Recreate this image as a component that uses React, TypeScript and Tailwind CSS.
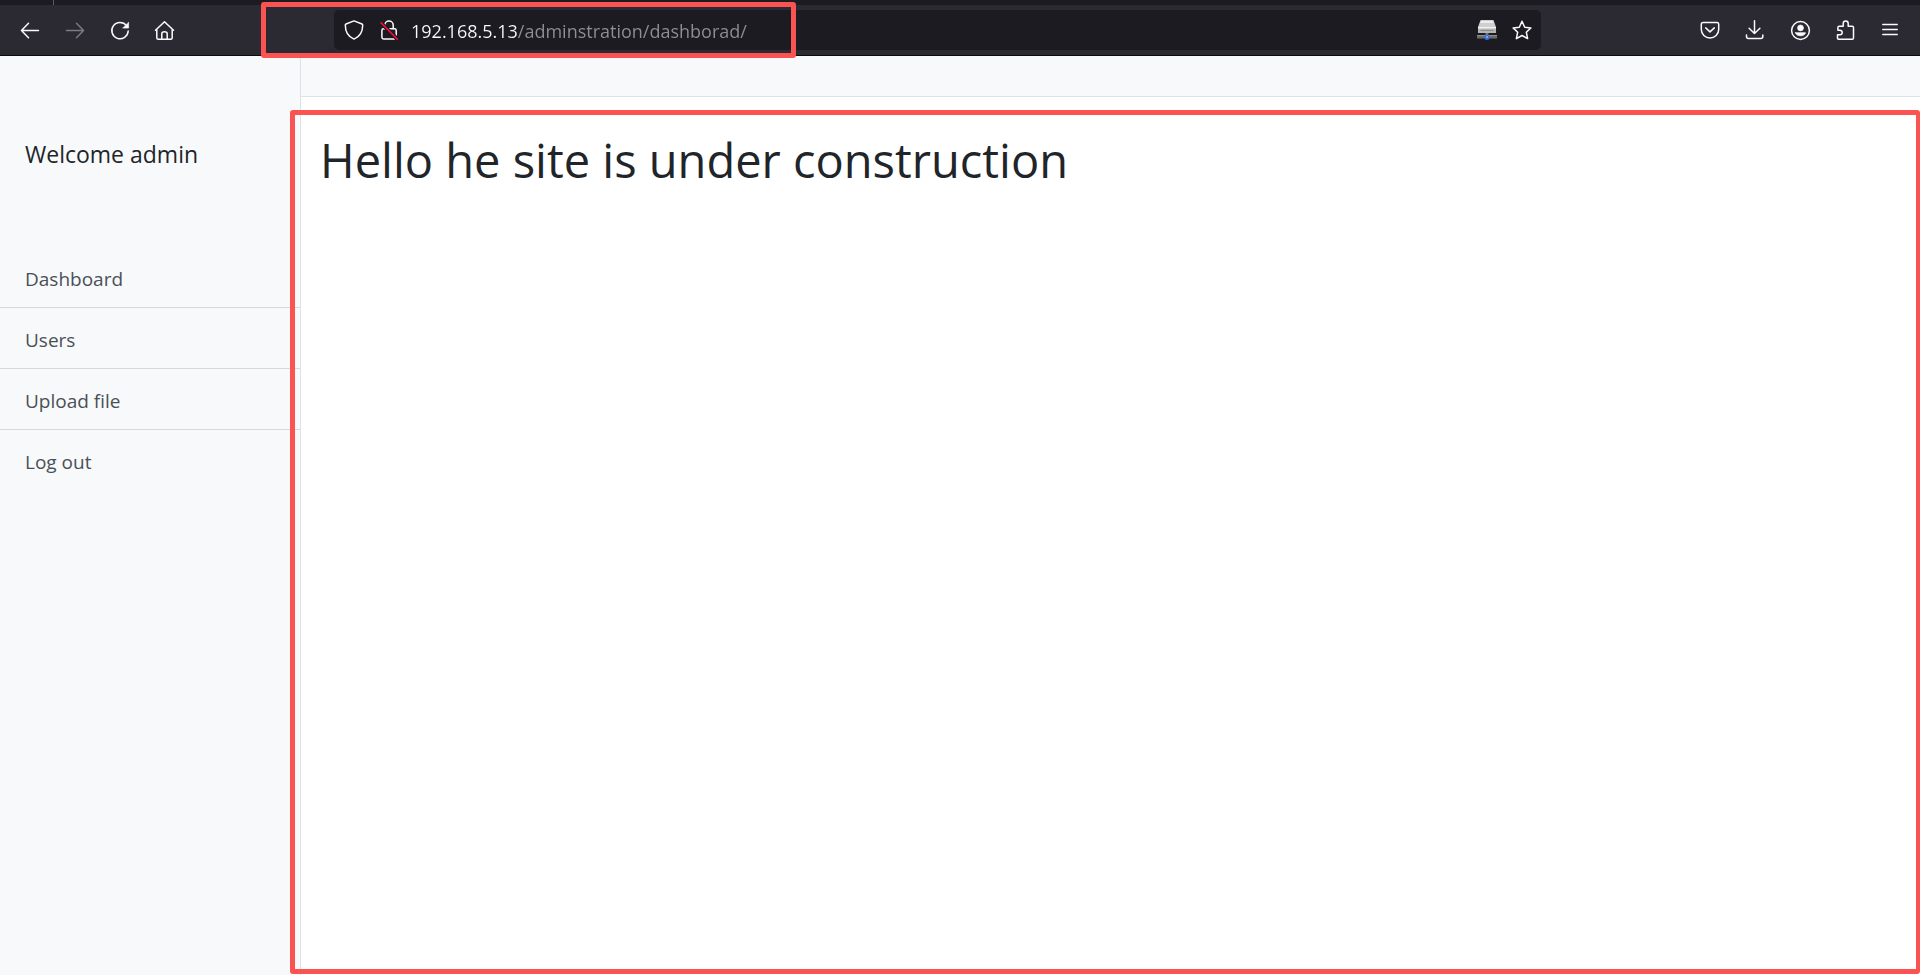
import type { ReactNode } from 'react';

type IconButtonProps = { label: string; muted?: boolean; children: ReactNode };

function Icon({ children }: { children: ReactNode }) {
  return (
    <svg
      viewBox="0 0 20 20"
      className="size-5 shrink-0 overflow-visible"
      fill="none"
      stroke="currentColor"
      strokeWidth="1.5"
      strokeLinecap="round"
      strokeLinejoin="round"
      aria-hidden="true"
    >
      {children}
    </svg>
  );
}

function IconButton({ label, muted, children }: IconButtonProps) {
  return (
    <button
      type="button"
      aria-label={label}
      disabled={muted}
      className="flex size-5 items-center justify-center text-[#fbfbfe] disabled:text-[#7b7a82]"
    >
      <Icon>{children}</Icon>
    </button>
  );
}

function Toolbar() {
  return (
    <header className="bg-[#2b2a33]">
      <div className="flex h-[5px] bg-[#1c1b22]">
        <div className="ml-[53px] w-px bg-[#5b5b66]" />
      </div>
      <div className="flex h-[51px] items-center border-b border-[#0c0c0d] pr-5 pl-5">
        <nav aria-label="Browser" className="flex gap-[25px]">
          <IconButton label="Back">
            <path d="M18.5 10.500H1.500M8.500 3.300 1.500 10.500l7 7.200" />
          </IconButton>
          <IconButton label="Forward" muted>
            <path d="M1.500 10.500h17M11.500 3.300l7 7.200-7 7.200" />
          </IconButton>
          <IconButton label="Reload">
            <path d="M16.500 5.600A8.200 8.200 0 1 0 18.200 11" />
            <path d="M18.600 2.500v5.600H13z" fill="currentColor" strokeWidth="0.600" />
          </IconButton>
          <IconButton label="Home">
            <path d="M.5 10.300 9.500 1.700l9 8.600M1.800 9.300v8.400c0 .9.600 1.500 1.500 1.500h12.400c.9 0 1.500-.6 1.500-1.500V9.300M6.800 19v-5.300c0-1.200.9-2 2.700-2s2.700.8 2.700 2V19" />
          </IconButton>
        </nav>

        <div className="relative mr-[159px] ml-[159px] flex h-10 min-w-0 flex-1 items-center rounded-[5px] bg-[#1c1b22] pr-[9px] pl-[10px] text-[#fbfbfe]">
          <IconButton label="Tracking protection">
            <path d="M10 .9 18 4c.5.200.7.500.7 1 0 6.800-3 11.800-8.700 14.100C4.300 16.800 1.300 11.800 1.300 5c0-.5.200-.8.700-1z" />
          </IconButton>
          <span className="w-[15px]" />
          <IconButton label="Connection not secure">
            <path d="M5.800 9V5.200a4.200 4.200 0 0 1 8.400 0V9M5 8.800h10.500c1 0 1.700.7 1.700 1.700v6.800c0 1-.7 1.700-1.700 1.700H4.600c-1 0-1.700-.7-1.700-1.700v-6.800c0-1 .7-1.700 1.700-1.700" />
            <path d="M2 2.800 18.400 19.200" stroke="#1c1b22" strokeWidth="4" />
            <path d="M2 2.800 18.400 19.200" stroke="#ff0a3c" strokeWidth="1.600" />
          </IconButton>
          <input
            type="text"
            aria-label="Address"
            defaultValue="192.168.5.13/adminstration/dashborad/"
            className="ml-3 h-full min-w-0 flex-1 bg-[linear-gradient(90deg,#fbfbfe_106px,#8f8f96_106px)] bg-clip-text pt-px text-lg text-transparent caret-white outline-none"
          />
          <button type="button" aria-label="Network drive" className="mr-[15px]">
            <svg viewBox="0 0 20 20" className="size-5" aria-hidden="true">
              <path d="M3.500 0h13L19 7v6H1V7z" fill="#b4b4b4" />
              <path d="M4 .5h12l1 2.500H3z" fill="#ececec" />
              <path d="M3 3h14l1.500 4h-17z" fill="#cfcfcf" />
              <path d="M1 7h18v1.500H1z" fill="#f2f2f2" />
              <path d="M3.500 10.500h13" stroke="#8a8a8a" />
              <path d="M0 15h20v3.500H0z" fill="#6c6c6c" />
              <path d="M0 15h20v1H0z" fill="#8e8e8e" />
              <path d="M8.500 13h3v3h-3z" fill="#777" />
              <circle cx="10" cy="17.500" r="2.500" fill="#2f6fe0" />
              <circle cx="10" cy="17" r="1" fill="#8fb8ff" />
            </svg>
          </button>
          <IconButton label="Bookmark this page">
            <path d="m10 1.300 2.700 5.900 6.200.7-4.600 4.300 1.300 6.400-5.600-3.100-5.600 3.100 1.300-6.400L1.100 7.900l6.200-.7z" />
          </IconButton>
          <div className="pointer-events-none absolute -top-[8px] -bottom-[8px] -left-[73px] w-[535px] rounded-[3px] border-[5px] border-[#fb5252]" />
        </div>

        <nav aria-label="Tools" className="flex gap-[25px]">
          <IconButton label="Pocket">
            <path d="M3 2.500h14c1 0 1.700.7 1.700 1.700v5.300a8.700 8.400 0 0 1-17.400 0V4.200c0-1 .7-1.700 1.700-1.700zM5.700 7.900 10 11.900l4.300-4" />
          </IconButton>
          <IconButton label="Downloads">
            <path d="M9.500.8v12.700M4.100 8.300l5.400 5.200 5.400-5.200M1.500 15v1.500c0 1.300.8 2 2 2h12.300c1.200 0 2-.7 2-2V15" />
          </IconButton>
          <IconButton label="Account">
            <circle cx="10.500" cy="10.500" r="8.900" />
            <circle cx="10.500" cy="7.900" r="3" fill="currentColor" strokeWidth="0.500" />
            <path d="M5.500 12.800h10c-.6 2-2.500 3-5 3s-4.400-1-5-3z" fill="currentColor" strokeWidth="0.800" />
          </IconButton>
          <IconButton label="Extensions">
            <path d="M3.500 19.200h13.700c.8 0 1.300-.5 1.300-1.300V7.500c0-.8-.5-1.300-1.300-1.300h-4V3.500a2.500 2.500 0 0 0-5 0v2.700h-4c-.8 0-1.300.5-1.300 1.300v2.700h2a2.200 2.200 0 0 1 0 4.600H2.500v3.400c0 .7.400 1 1 1z" />
          </IconButton>
          <IconButton label="Menu">
            <path d="M2.800 4.500h14.400M2.800 9.500h14.400M2.800 14.500h14.400" />
          </IconButton>
        </nav>
      </div>
    </header>
  );
}

const links = ['Dashboard', 'Users', 'Upload file', 'Log out'];

function Sidebar() {
  return (
    <aside className="w-[301px] shrink-0 border-r border-[#dee2e6] bg-[#f8f9fa]">
      <div className="px-[25px] pt-[81px] pb-[76px] text-[23px] leading-[34px]">Welcome admin</div>
      <ul className="divide-y divide-[#d6d8db]">
        {links.map((link) => (
          <li key={link}>
            <a href="#" className="block px-[25px] pt-[17px] pb-[13px] text-[19px] leading-[30px] text-[#495057]">
              {link}
            </a>
          </li>
        ))}
      </ul>
    </aside>
  );
}

export default function App() {
  return (
    <div className="flex min-h-screen flex-col bg-white font-['Open_Sans','Noto_Sans',sans-serif] text-[#212529]">
      <Toolbar />
      <div className="flex flex-1">
        <Sidebar />
        <div className="flex min-w-0 flex-1 flex-col">
          <div className="h-[41px] border-b border-[#dee2e6] bg-[#f8f9fa]" />
          <main className="relative flex-1 px-[19px] pt-[33px]">
            <h1 className="text-[47px] leading-[60px]">Hello he site is under construction</h1>
            <div className="pointer-events-none absolute top-[13px] right-0 bottom-px -left-[11px] rounded-[3px] border-[5px] border-r-4 border-[#fb5252]" />
          </main>
        </div>
      </div>
    </div>
  );
}
